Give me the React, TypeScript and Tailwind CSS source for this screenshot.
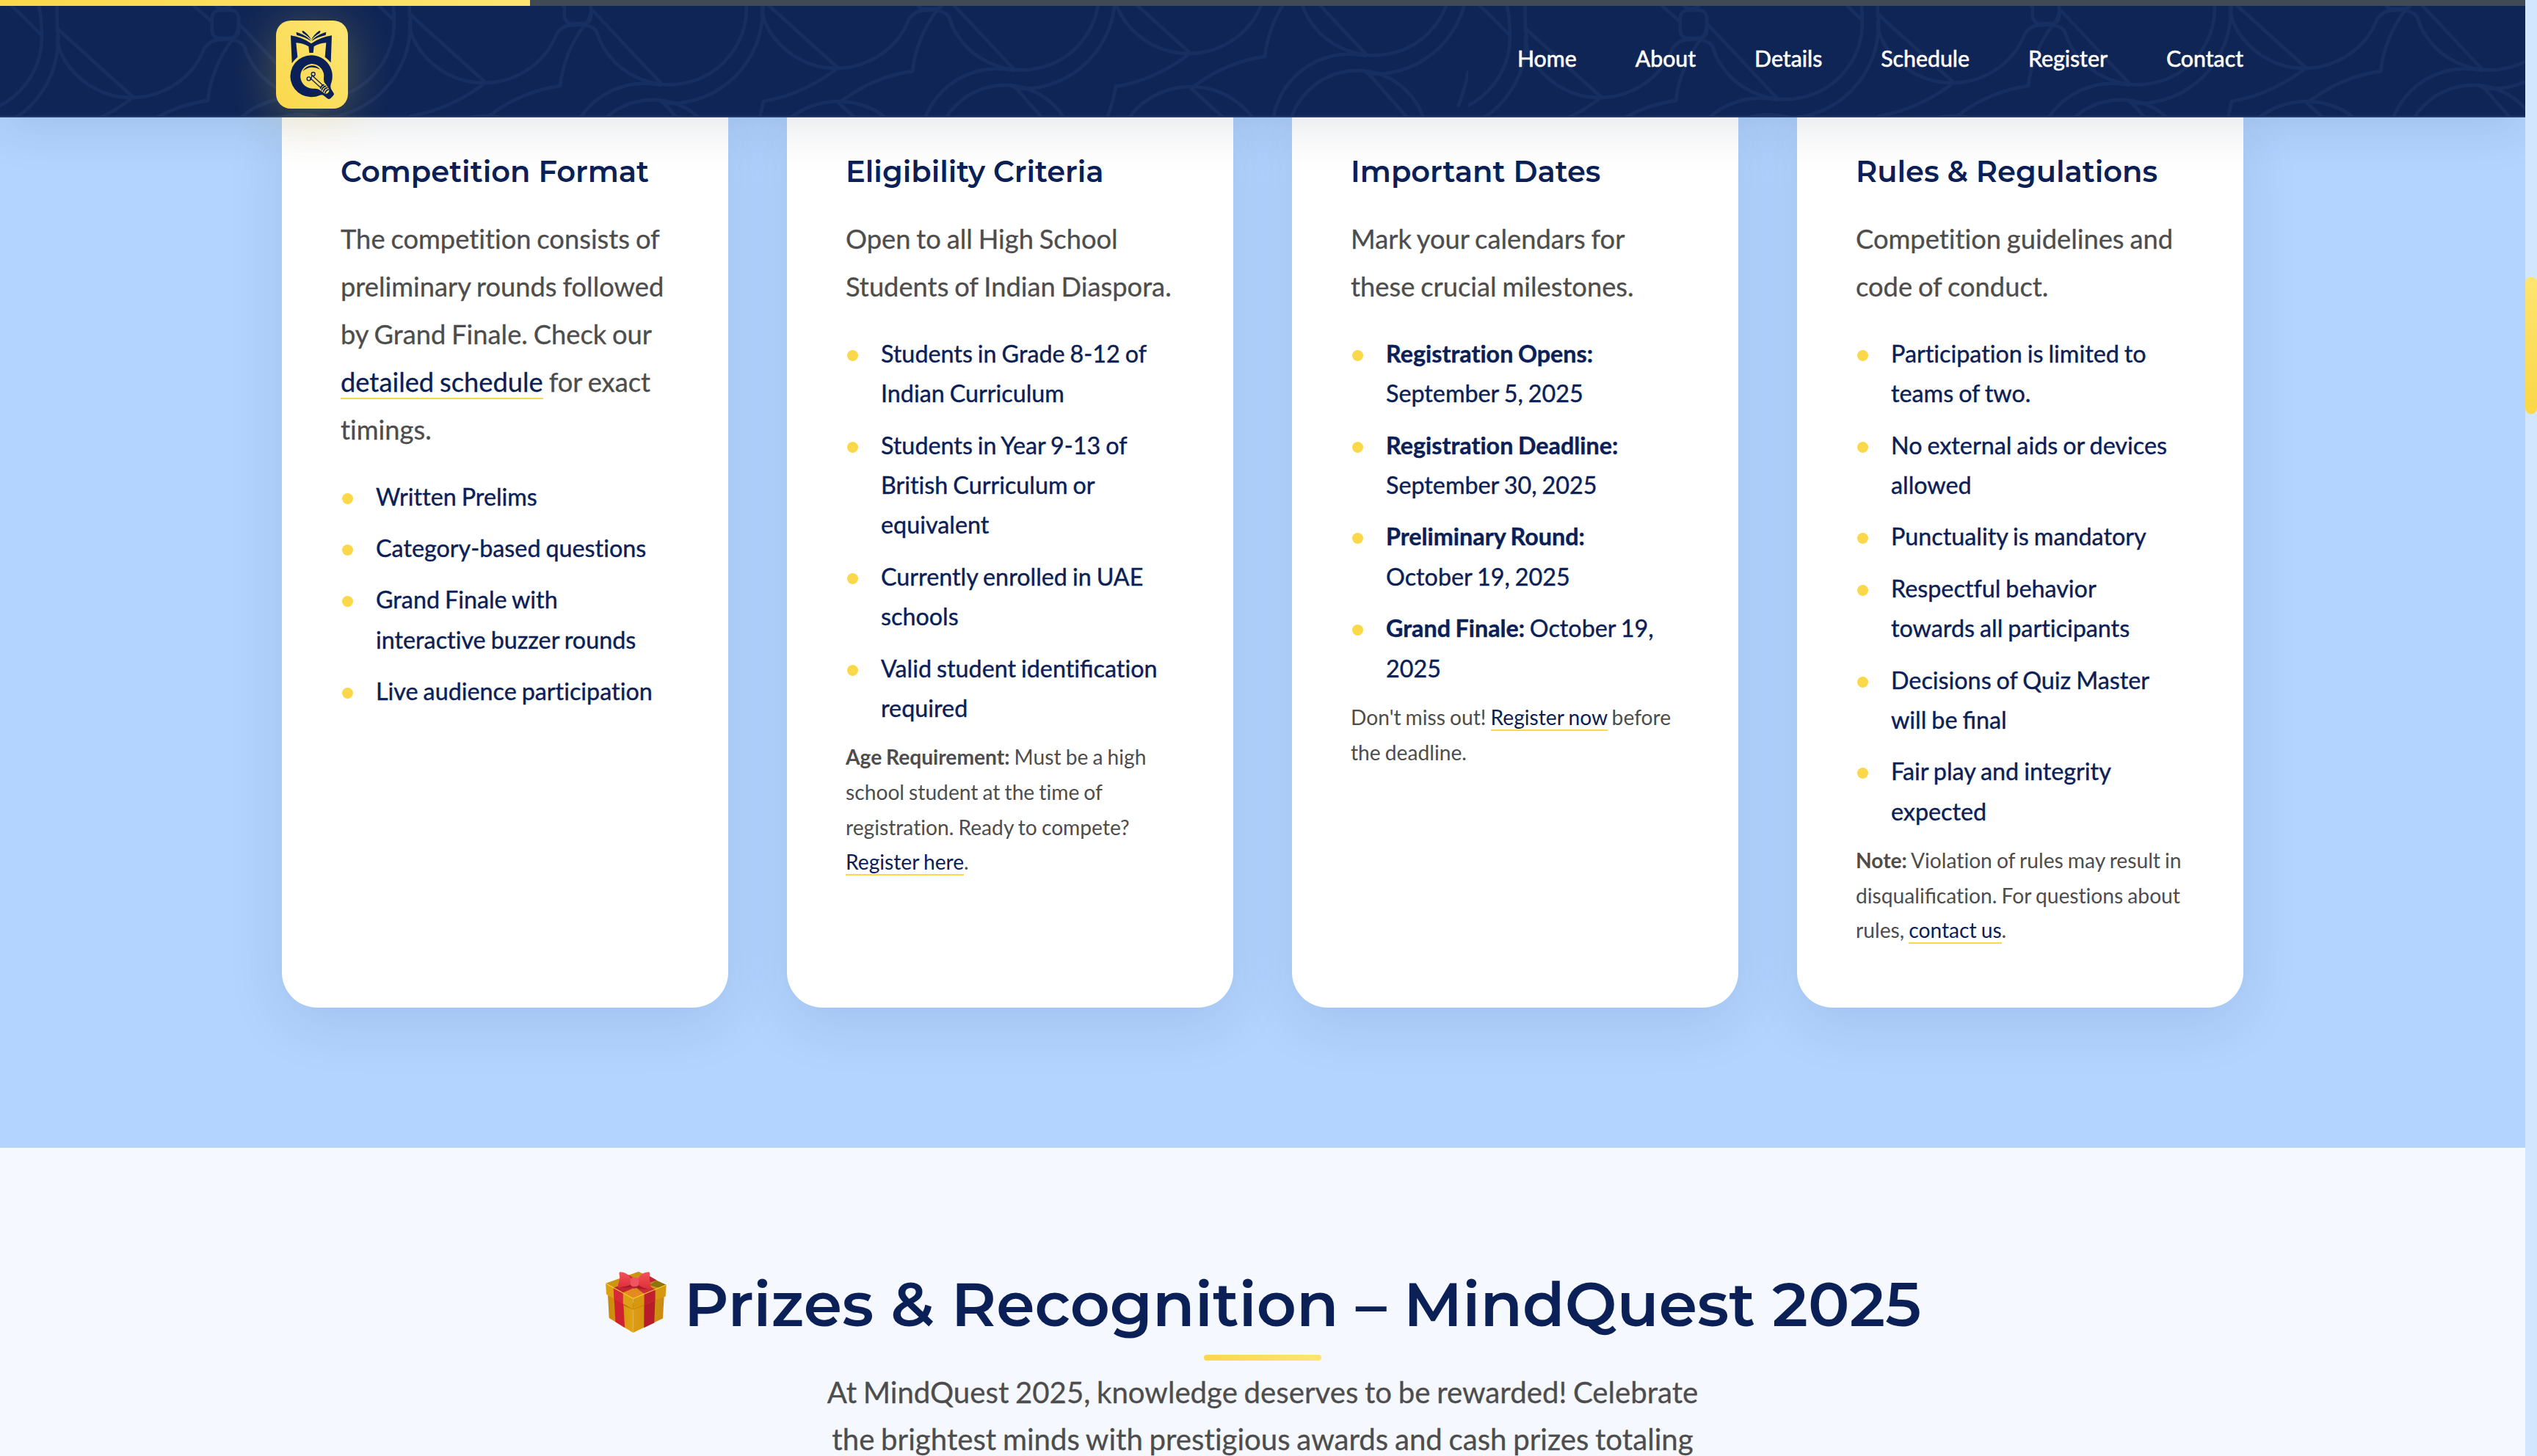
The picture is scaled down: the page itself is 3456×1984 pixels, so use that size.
import { Fragment, type ReactNode } from "react";

const NAV = ["Home", "About", "Details", "Schedule", "Register", "Contact"];

/* Keeps the "fi" ligature while the other common ligatures stay off. */
function T({ children }: { children: string }) {
  const parts = children.split("fi");
  return (
    <>
      {parts.map((part, i) => (
        <Fragment key={i}>
          {i > 0 && <span className="[font-variant-ligatures:common-ligatures]">fi</span>}
          {part}
        </Fragment>
      ))}
    </>
  );
}

function Link({ children }: { children: ReactNode }) {
  return (
    <a href="#" className="border-b-2 border-[#fbd84a] text-[#0a2056]">
      {children}
    </a>
  );
}

const SHIFTS = [
  [-960, 40],
  [-480, 20],
  [0, 0],
  [480, -20],
  [960, -40],
];

function HeaderPattern() {
  return (
    <svg className="absolute inset-0 h-full w-full" aria-hidden="true">
      <defs>
        <g id="knot" fill="none" stroke="#172e61" strokeWidth="4.5" strokeLinejoin="round" strokeLinecap="round">
          <path d="M808 15 900 113" />
          <path d="M812 42Q815 48 817 55A105 105 0 0 0 1017 11Q1017 -20 1010 -45" />
          <path d="M1037 -60 1038 0Q1040 10 1039 14A127 127 0 0 1 912 141Q905 141 900 138" />
          <path d="M900 116A105 105 0 0 0 773 218" />
          <path d="M794 231A95 95 0 0 1 984 231" />
          <path d="M903 139 1010 260" />
          <path d="M960 -48 1017 8" />
          <path d="M1038 -1 1142 93" />
          <path d="M1038 10Q1038 18 1041 28A107 107 0 0 0 1235 34Q1241 14 1262 14Q1284 12 1292 22L1297 35" />
          <rect x="1249" y="-26" width="36" height="38" rx="10" />
          <path d="M1250 -60Q1248 -30 1262 -28Q1280 -27 1284 -60" />
          <path d="M1224 -32 1247 -12" />
          <path d="M1286 -6Q1283 8 1277 13Q1248 52 1243 97Q1192 104 1147 137" />
          <path d="M1137 96Q1090 130 1040 138Q1036 160 1027 184" />
          <path d="M1037 243A105 105 0 0 1 1247 243" />
          <path d="M1143 141 1205 197" />
        </g>
        <pattern id="tile" width="2000" height="160" patternUnits="userSpaceOnUse">
          {SHIFTS.map(([x, y]) => (
            <use key={x} href="#knot" x={x} y={y} />
          ))}
        </pattern>
      </defs>
      <rect width="100%" height="100%" fill="url(#tile)" />
    </svg>
  );
}

function Logo() {
  return (
    <div className="h-[120px] w-[98px] overflow-visible rounded-[20px] bg-linear-to-tr from-[#fad84a] to-[#fde674] shadow-[0_8px_64px_rgba(250,216,74,0.3)]">
      <svg viewBox="108 84 294 360" className="h-full w-full" fill="#0a2056">
        <path d="M168 145Q215 152 252 178Q289 152 336 145L332 256Q321 243 308 233L313 175Q285 177 263 190L260 216H244L241 190Q219 177 190 175L196 233Q184 243 173 259Z" />
        <path d="M190 131 200 134Q237 147 251 168Q228 152 193 144Z" />
        <path d="M214 126 221 127Q245 145 252 164Q240 148 217 135Z" />
        <path d="M313 131 303 134Q267 147 253 168Q276 152 311 144Z" />
        <path d="M290 126 283 127Q259 145 252 164Q264 148 287 135Z" />
        <path d="M253 226A85.500 85.500 0 0 1 332 344Q329 352 333 364L344 381Q347 386 342 391L331 402Q325 407 318 403L303 391Q297 385 288 389A85.500 85.500 0 1 1 253 226Z" />
        <path
          d="M253 261A50.500 50.500 0 0 1 303 322Q302 336 312 345L324 363Q328 375 318 382Q308 386 300 377L287 368Q278 361 264 362A50.500 50.500 0 1 1 253 261Z"
          fill="#fbdd5c"
        />
        <path d="M217 291Q229 270 253 268Q274 267 288 284Q270 274 252 275Q233 277 217 291Z" />
        <g fill="none" stroke="#0a2056" strokeWidth="4" strokeLinecap="round">
          <circle cx="260" cy="303" r="7.500" />
          <circle cx="242" cy="322" r="7.500" />
          <path d="M257 310 298 347M249 320 289 357M251 325 255 308" />
          <path d="M290 361Q292 350 303 347M295 368Q298 355 311 352M302 374Q305 361 317 359M309 380Q311 369 322 366" strokeWidth="5" />
        </g>
      </svg>
    </div>
  );
}

function Gift() {
  return (
    <svg viewBox="40 40 260 260" className="mr-[22px] h-[87px] w-[87px] translate-y-[-3px]">
      <defs>
        <linearGradient id="gold" x1="0" x2="1">
          <stop offset="0" stopColor="#c98a0c" />
          <stop offset="1" stopColor="#e2a313" />
        </linearGradient>
        <linearGradient id="goldSide" x1="0" x2="1">
          <stop offset="0" stopColor="#dd9c12" />
          <stop offset="1" stopColor="#c98a10" />
        </linearGradient>
        <linearGradient id="bow" x1="0" y1="0" x2="0" y2="1">
          <stop offset="0" stopColor="#f4525a" />
          <stop offset="1" stopColor="#dc2f3a" />
        </linearGradient>
      </defs>
      <path d="M55 140 158 190V294L60 234Z" fill="url(#gold)" />
      <path d="M158 190 284 145 279 236 158 294Z" fill="url(#goldSide)" />
      <path d="M80 150 118 168 124 274 86 250Z" fill="#cf2230" />
      <path d="M203 165 248 150 244 254 202 274Z" fill="#b81b2a" />
      <path d="M118 172V182L158 200 204 182V172Z" fill="#a96f08" />
      <path d="M46 93 180 45 293 99 158 157Z" fill="#cf9414" />
      <path d="M46 93 158 155V199L49 138Z" fill="#dd9f14" />
      <path d="M158 155 293 99 290 146 158 199Z" fill="#d6980f" />
      <path d="M78 111 117 132V178L80 157Z" fill="#d82a38" />
      <path d="M203 136 248 118V163L203 181Z" fill="#c01f2e" />
      <path d="M78 111 222 62 254 80 117 132Z" fill="#c22633" />
      <path d="M110 66 136 57 248 118 203 136Z" fill="#cf2b38" />
      <path d="M116 131 158 113 204 136 158 155Z" fill="#e58a22" />
      <path d="M222 100 252 82 292 99 262 111Z" fill="#8d7410" />
      <path d="M46 93 158 155 293 99" fill="none" stroke="#fbd437" strokeWidth="3" />
      <path d="M97 105Q130 118 160 104Q190 124 229 113L222 98 100 92Z" fill="#8f1420" opacity=".6" />
      <path d="M104 47Q134 47 150 74V98Q125 108 98 110Q94 106 100 88Q106 72 101 54Q101 48 104 47Z" fill="url(#bow)" />
      <path d="M220 47Q192 48 177 74V98Q200 114 227 116Q232 112 228 92Q222 74 226 54Q225 46 220 47Z" fill="url(#bow)" />
      <rect x="147" y="69" width="34" height="37" rx="12" fill="#ee5560" />
    </svg>
  );
}

type Card = {
  title: string;
  intro: ReactNode;
  items: { bold?: string; text: string }[];
  note?: ReactNode;
};

const CARDS: Card[] = [
  {
    title: "Competition Format",
    intro: (
      <>
        The competition consists of
        <br />
        preliminary rounds followed
        <br />
        by Grand Finale. Check our
        <br />
        <Link>detailed schedule</Link> for exact
        <br />
        timings.
      </>
    ),
    items: [
      { text: "Written Prelims" },
      { text: "Category-based questions" },
      { text: "Grand Finale with interactive buzzer rounds" },
      { text: "Live audience participation" },
    ],
  },
  {
    title: "Eligibility Criteria",
    intro: (
      <>
        Open to all High School
        <br />
        Students of Indian Diaspora.
      </>
    ),
    items: [
      { text: "Students in Grade 8-12 of Indian Curriculum" },
      { text: "Students in Year 9-13 of British Curriculum or equivalent" },
      { text: "Currently enrolled in UAE schools" },
      { text: "Valid student identification required" },
    ],
    note: (
      <>
        <b>Age Requirement:</b> Must be a high
        <br />
        school student at the time of
        <br />
        registration. Ready to compete?
        <br />
        <Link>Register here</Link>.
      </>
    ),
  },
  {
    title: "Important Dates",
    intro: (
      <>
        Mark your calendars for
        <br />
        these crucial milestones.
      </>
    ),
    items: [
      { bold: "Registration Opens:", text: "September 5, 2025" },
      { bold: "Registration Deadline:", text: "September 30, 2025" },
      { bold: "Preliminary Round:", text: "October 19, 2025" },
      { bold: "Grand Finale:", text: "October 19, 2025" },
    ],
    note: (
      <>
        Don't miss out! <Link>Register now</Link> before
        <br />
        the deadline.
      </>
    ),
  },
  {
    title: "Rules & Regulations",
    intro: (
      <>
        Competition guidelines and
        <br />
        code of conduct.
      </>
    ),
    items: [
      { text: "Participation is limited to teams of two." },
      { text: "No external aids or devices allowed" },
      { text: "Punctuality is mandatory" },
      { text: "Respectful behavior towards all participants" },
      { text: "Decisions of Quiz Master will be final" },
      { text: "Fair play and integrity expected" },
    ],
    note: (
      <>
        <b>Note:</b> Violation of rules may result in
        <br />
        <T>disqualification. For questions about</T>
        <br />
        rules, <Link>contact us</Link>.
      </>
    ),
  },
];

function InfoCard({ title, intro, items, note }: Card) {
  return (
    <article className="rounded-b-[48px] bg-white px-20 pt-[50px] shadow-[0_20px_80px_rgba(10,32,86,0.1)]">
      <h3 className="font-['Montserrat'] text-[40px] leading-[48px] font-semibold tracking-normal whitespace-nowrap text-[#0a2056]">
        {title}
      </h3>
      <p className="mt-[35px] text-[36.300px] leading-[64.900px] [word-spacing:-0.04em] whitespace-nowrap text-[#4d4d4d] [-webkit-text-stroke:0.3px]">
        {intro}
      </p>
      <ul className="mt-8 pr-4 text-[32.300px] leading-[54.400px] [word-spacing:-0.04em] text-[#0a2056] [-webkit-text-stroke:0.4px]">
        {items.map((item) => (
          <li key={(item.bold ?? "") + item.text} className="mb-4 flex">
            <span className="mt-[22px] mr-[31px] ml-[2px] h-[15px] w-[15px] shrink-0 rounded-full bg-[#fbd84a]" />
            <span>
              {item.bold && <b>{item.bold} </b>}
              <T>{item.text}</T>
            </span>
          </li>
        ))}
      </ul>
      {note && (
        <p className="text-[28.200px] leading-[47.600px] [word-spacing:-0.04em] whitespace-nowrap text-[#4d4d4d]">
          {note}
        </p>
      )}
    </article>
  );
}

export default function App() {
  return (
    <div className="flex h-[1984px] w-[3456px] overflow-hidden bg-[#d2e7ff] font-['Lato',sans-serif] [font-variant-ligatures:no-common-ligatures]">
      <div className="flex w-[3440px] flex-col overflow-hidden">
        <header className="relative z-10 h-[160px] shrink-0 border-b-2 border-[#263a68] bg-[#0f2556] shadow-[0_16px_64px_rgba(10,25,70,0.1)]">
          <HeaderPattern />
          <div className="relative h-2 bg-[#404a54]">
            <div className="h-2 w-[722px] bg-linear-to-r from-[#fbd84a] to-[#fde570]" />
          </div>
          <div className="relative flex justify-between pr-[384px] pl-[376px]">
            <div className="pt-5">
              <Logo />
            </div>
            <nav className="flex gap-20 pt-[53px] text-[30.300px] leading-[36px] text-white [-webkit-text-stroke:0.6px]">
              {NAV.map((label) => (
                <a href="#" key={label}>
                  {label}
                </a>
              ))}
            </nav>
          </div>
        </header>

        <section className="flex h-[1404px] shrink-0 items-start justify-center bg-[#b2d4fe]">
          <div className="grid h-[1213px] w-[2672px] grid-cols-4 gap-20">
            {CARDS.map((card) => (
              <InfoCard key={card.title} {...card} />
            ))}
          </div>
        </section>

        <section className="flex grow flex-col items-center bg-[#f5f8ff] pt-[163px]">
          <h2 className="flex items-center font-['Montserrat'] text-[84px] leading-[100px] font-semibold whitespace-nowrap text-[#0a2056]">
            <Gift />
            Prizes &amp; Recognition – MindQuest 2025
          </h2>
          <div className="mt-[19px] h-2 w-40 shrink-0 rounded-full bg-linear-to-r from-[#fbd84a] to-[#fde570]" />
          <p className="mt-[11px] text-center text-[40.200px] leading-[64px] [word-spacing:-0.04em] whitespace-nowrap text-[#4d4d4d] [-webkit-text-stroke:0.3px]">
            At MindQuest 2025, knowledge deserves to be rewarded! Celebrate
            <br />
            the brightest minds with prestigious awards and cash prizes totaling
          </p>
        </section>
      </div>
      <div className="w-4 pt-[377px]">
        <div className="h-[187px] rounded-full bg-linear-to-t from-[#fbd745] to-[#fde570]" />
      </div>
    </div>
  );
}
